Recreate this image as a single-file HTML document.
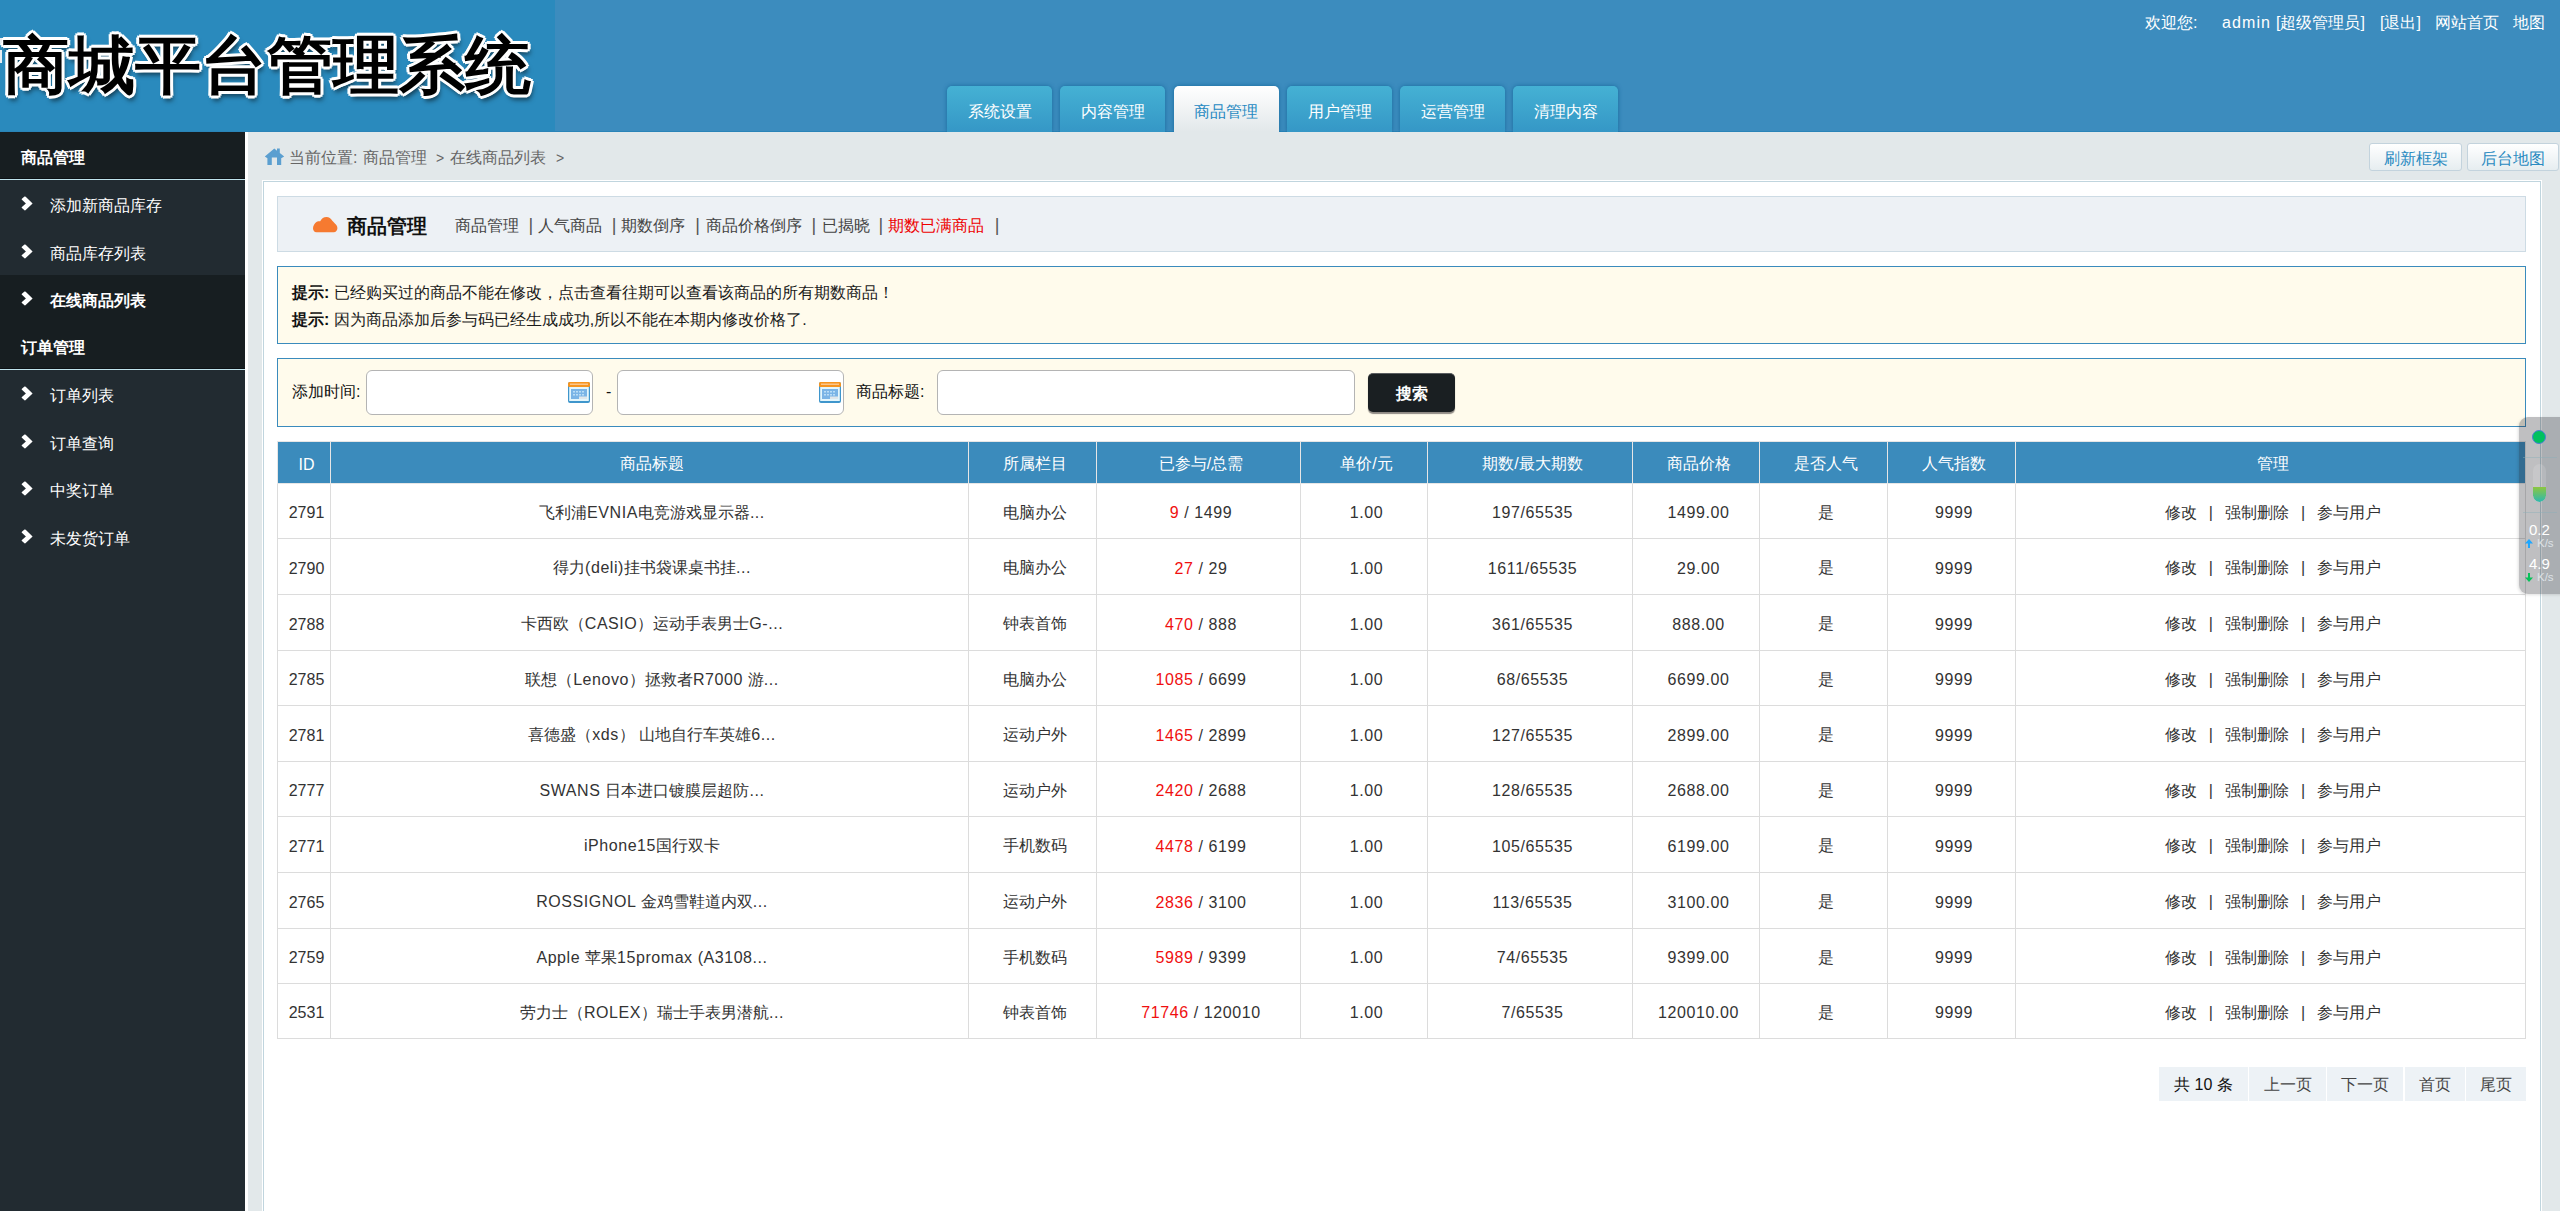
<!DOCTYPE html>
<html><head><meta charset="utf-8">
<style>
*{box-sizing:border-box;margin:0;padding:0}
html,body{width:2560px;height:1211px;overflow:hidden}
body{position:relative;background:#e2e8ea;font-family:"Liberation Sans",sans-serif;font-size:16px;color:#333}
.abs{position:absolute}
#hd{left:0;top:0;width:2560px;height:132px;background:#3c8cbe;border-bottom:1px solid #2a84b8}
#logo{left:0;top:0;width:555px;height:131px;background:#2a8abd;overflow:hidden}
#logo span{position:absolute;left:3px;top:27px;font-size:66px;font-weight:900;transform:scaleY(.955);transform-origin:0 0;color:#000;white-space:nowrap;line-height:80px;
 -webkit-text-stroke:0;text-shadow:-2px -2px 0 #fff,2px -2px 0 #fff,-2px 2px 0 #fff,2px 2px 0 #fff,0 3px 0 #fff,0 -3px 0 #fff,3px 0 0 #fff,-3px 0 0 #fff,2px 5px 5px rgba(0,0,0,.6)}
#user{top:13px;left:2145px;width:400px;height:20px;color:#fff;white-space:nowrap;line-height:20px}
#user span{position:absolute;top:0}
.tab{top:86px;width:105px;height:46px;border-radius:5px 5px 0 0;background:linear-gradient(#45b1d4,#3597c6);color:#fff;text-align:center;line-height:46px;padding-top:3px;box-shadow:0 0 4px rgba(15,100,150,.85)}
.tab.on{background:linear-gradient(#fff,#e2e8ea);color:#2589c2}
#side{left:0;top:132px;width:245px;height:1079px;background:#222b31}
#strip{left:245px;top:132px;width:3px;height:1079px;background:#fff}
.sh{position:absolute;left:0;width:245px;height:48px;background:#171e21;color:#fff;font-weight:bold;line-height:46px;padding:3px 0 0 21px;border-bottom:1px solid #bfe3ec}
.sh:after{content:"";position:absolute;left:0;right:0;bottom:0;height:1px;background:#0c1115}
.si{position:absolute;left:0;width:245px;height:47.5px;color:#fff;line-height:46px;padding:3px 0 0 50px}
.si.on{background:#171e21;font-weight:bold}
.si svg{position:absolute;left:20px;top:16px}

.btn{top:143px;height:28px;border:1px solid #c3d3dd;border-radius:3px;background:linear-gradient(#fff,#e6edf0);color:#2b8bc1;text-align:center;line-height:30px}
#box{left:262px;top:180px;width:2280px;height:1100px;border:1px solid #fff;box-shadow:inset 0 0 0 1px #c0d5de;background:#fff}
#nav{left:277px;top:196px;width:2249px;height:56px;border:1px solid #cddbe4;background:#edf1f5}
#notice{left:277px;top:266px;width:2249px;height:78px;border:1px solid #3a8bbd;background:#fffbec}
#search span{color:#111 !important}
#search{left:277px;top:358px;width:2249px;height:69px;border:1px solid #3a8bbd;background:#fffbec}
.inp{top:11px;height:45px;border:1px solid #b4b4b4;border-radius:6px;background:#fff}
#sbtn{left:1090px;top:14px;width:87px;height:39px;border-radius:5px;background:#1a1f22;border-top:1px solid #5a5d60;color:#fff;font-weight:bold;text-align:center;line-height:39px;box-shadow:0 1.5px 1px #8f8a85}

#tb{left:277px;top:441px;width:2249px;border-collapse:collapse;table-layout:fixed;background:#fff}
#tb td{border:1px solid #dcdcdc;text-align:center;color:#333;white-space:nowrap;overflow:hidden;padding:0}
#tb tr.th td{background:#3b8bbc;color:#fff;height:42px;border-color:#e6e6e6}
#tb .red{color:#f01010}
#tb tr:not(.th) td:nth-child(4),#tb tr:not(.th) td:nth-child(5),#tb tr:not(.th) td:nth-child(6),#tb tr:not(.th) td:nth-child(7),#tb tr:not(.th) td:nth-child(9){letter-spacing:.6px}
#tb .mg i{font-style:normal;color:#333;margin:0 12px}
#pager{left:2159px;top:1067px;width:367px;height:34px}
#pager span{position:absolute;top:0;height:34px;background:#edf2f6;color:#444;text-align:center;line-height:34px;padding-top:1px}

#wg{left:2519px;top:417px;width:60px;height:177px;border-radius:9px;background:rgba(35,36,42,.29);box-shadow:-1px 1px 3px rgba(0,0,0,.12);z-index:10}
#wg .wt{color:#fff;line-height:14px;white-space:nowrap}
#wg .wk{color:#dde2e6;font-size:11.5px;line-height:12px;white-space:nowrap}
#tb td{padding:4px 0 0 5px}
.nl{top:18px;line-height:22px;color:#444;white-space:nowrap}
.nl.sp{font-size:18px;top:17px}
#tb .lt{letter-spacing:.55px}
</style></head><body>
<div id="hd" class="abs"></div>
<div id="logo" class="abs"><span>商城平台管理系统</span><i class="abs" style="left:0;top:38px;width:1.5px;height:5px;background:#e8eef2"></i><i class="abs" style="left:0;top:50px;width:1.5px;height:13px;background:#e8eef2"></i></div>
<div id="user" class="abs"><span style="left:0">欢迎您:</span><span style="left:77px;letter-spacing:1.1px">admin</span><span style="left:131px">[超级管理员]</span><span style="left:235px">[退出]</span><span style="left:290px">网站首页</span><span style="left:368px">地图</span></div>
<div class="abs" style="left:0;top:0;width:2560px;height:132px;overflow:hidden">
<div class="tab abs" style="left:947px">系统设置</div>
<div class="tab abs" style="left:1060px">内容管理</div>
<div class="tab abs on" style="left:1173.5px">商品管理</div>
<div class="tab abs" style="left:1287px">用户管理</div>
<div class="tab abs" style="left:1400px">运营管理</div>
<div class="tab abs" style="left:1513px">清理内容</div>
</div>

<div id="side" class="abs">
 <div class="sh" style="top:0">商品管理</div>
 <div class="si" style="top:48px"><svg width="14" height="18" viewBox="0 0 14 18"><path d="M4.5 0.6 Q5.1 0.2 5.7 0.7 L12.6 7.4 L5.7 14.1 Q5.1 14.6 4.5 14.2 L1.9 12.1 Q1.3 11.6 1.9 11 L5.9 7.4 L1.9 3.8 Q1.3 3.2 1.9 2.7 Z" fill="#fff"/></svg>添加新商品库存</div>
 <div class="si" style="top:95.5px"><svg width="14" height="18" viewBox="0 0 14 18"><path d="M4.5 0.6 Q5.1 0.2 5.7 0.7 L12.6 7.4 L5.7 14.1 Q5.1 14.6 4.5 14.2 L1.9 12.1 Q1.3 11.6 1.9 11 L5.9 7.4 L1.9 3.8 Q1.3 3.2 1.9 2.7 Z" fill="#fff"/></svg>商品库存列表</div>
 <div class="si on" style="top:143px;height:47px"><svg width="14" height="18" viewBox="0 0 14 18"><path d="M4.5 0.6 Q5.1 0.2 5.7 0.7 L12.6 7.4 L5.7 14.1 Q5.1 14.6 4.5 14.2 L1.9 12.1 Q1.3 11.6 1.9 11 L5.9 7.4 L1.9 3.8 Q1.3 3.2 1.9 2.7 Z" fill="#fff"/></svg>在线商品列表</div>
 <div class="sh" style="top:190px">订单管理</div>
 <div class="si" style="top:238px"><svg width="14" height="18" viewBox="0 0 14 18"><path d="M4.5 0.6 Q5.1 0.2 5.7 0.7 L12.6 7.4 L5.7 14.1 Q5.1 14.6 4.5 14.2 L1.9 12.1 Q1.3 11.6 1.9 11 L5.9 7.4 L1.9 3.8 Q1.3 3.2 1.9 2.7 Z" fill="#fff"/></svg>订单列表</div>
 <div class="si" style="top:285.5px"><svg width="14" height="18" viewBox="0 0 14 18"><path d="M4.5 0.6 Q5.1 0.2 5.7 0.7 L12.6 7.4 L5.7 14.1 Q5.1 14.6 4.5 14.2 L1.9 12.1 Q1.3 11.6 1.9 11 L5.9 7.4 L1.9 3.8 Q1.3 3.2 1.9 2.7 Z" fill="#fff"/></svg>订单查询</div>
 <div class="si" style="top:333px"><svg width="14" height="18" viewBox="0 0 14 18"><path d="M4.5 0.6 Q5.1 0.2 5.7 0.7 L12.6 7.4 L5.7 14.1 Q5.1 14.6 4.5 14.2 L1.9 12.1 Q1.3 11.6 1.9 11 L5.9 7.4 L1.9 3.8 Q1.3 3.2 1.9 2.7 Z" fill="#fff"/></svg>中奖订单</div>
 <div class="si" style="top:380.5px"><svg width="14" height="18" viewBox="0 0 14 18"><path d="M4.5 0.6 Q5.1 0.2 5.7 0.7 L12.6 7.4 L5.7 14.1 Q5.1 14.6 4.5 14.2 L1.9 12.1 Q1.3 11.6 1.9 11 L5.9 7.4 L1.9 3.8 Q1.3 3.2 1.9 2.7 Z" fill="#fff"/></svg>未发货订单</div>
</div>
<div id="strip" class="abs"></div>


<!-- breadcrumb -->
<svg class="abs" style="left:265px;top:147.7px;overflow:visible" width="20" height="18" viewBox="0 0 20 18"><path d="M9.3 0.6 L12 2.7 L12 0.6 L14.8 0.6 L14.8 4.9 L19.2 8.4 L16.2 10.2 L16.2 17 L12 17 L12 9.4 L6.8 9.4 L6.8 17 L2.4 17 L2.4 10.2 L-0.2 8.4 Z" fill="#5b9fd0"/></svg>
<div class="abs" id="crumb" style="left:289px;top:147px;width:300px;height:22px;color:#666;line-height:22px;white-space:nowrap"><span class="abs" style="left:0">当前位置:</span><span class="abs" style="left:74px">商品管理</span><span class="abs" style="left:147px;font-size:14px">&gt;</span><span class="abs" style="left:161px">在线商品列表</span><span class="abs" style="left:267px;font-size:14px">&gt;</span></div>
<div class="abs btn" style="left:2369px;width:93px">刷新框架</div>
<div class="abs btn" style="left:2467px;width:92px">后台地图</div>

<div class="abs" id="box"></div>
<div class="abs" id="nav">
 <svg class="abs" style="left:35px;top:19.5px" width="26" height="17" viewBox="0 0 26 17"><path d="M3.5 15.3 C1.3 15.3 0 13.5 0 11.3 C0 8.8 1.5 6.3 3.8 4.8 C4.5 4.4 6 4.3 7.2 4.3 C8.5 1.5 10.8 0 13.5 0 C16 0 18 1.3 19.3 3.8 C21 5.5 22.5 7 23.5 8.2 C24.2 9.2 24.4 10.3 24.4 11.3 C24.4 13.5 22.8 15.3 20.8 15.3 Z" fill="#f67a30"/></svg>
 <span class="abs" style="left:69px;top:17px;font-size:20px;font-weight:bold;color:#111;line-height:24px">商品管理</span>
 <span class="abs nl" style="left:177px">商品管理</span><span class="abs nl" style="left:260px">人气商品</span><span class="abs nl" style="left:343px">期数倒序</span><span class="abs nl" style="left:427.5px">商品价格倒序</span><span class="abs nl" style="left:544px">已揭晓</span><span class="abs nl" style="left:610px;color:#e00">期数已满商品</span><span class="abs nl sp" style="left:250.6px;color:#555">|</span><span class="abs nl sp" style="left:333.7px;color:#555">|</span><span class="abs nl sp" style="left:417.2px;color:#555">|</span><span class="abs nl sp" style="left:533.5px;color:#555">|</span><span class="abs nl sp" style="left:600.4000000000001px;color:#555">|</span><span class="abs nl sp" style="left:716.7px;color:#555">|</span>
</div>
<div class="abs" id="notice">
 <div style="position:absolute;left:14px;top:12px;line-height:27px;color:#1a1a1a;white-space:nowrap"><b style="color:#111">提示:</b> 已经购买过的商品不能在修改，点击查看往期可以查看该商品的所有期数商品！<br><b style="color:#111">提示:</b> 因为商品添加后参与码已经生成成功,所以不能在本期内修改价格了.</div>
</div>
<div class="abs" id="search">
 <span class="abs" style="left:14px;top:22px;line-height:22px;color:#333">添加时间:</span>
 <div class="abs inp" style="left:88px;width:227px"><span class="abs" style="left:201px;top:11px;line-height:0"><svg width="22" height="21" viewBox="0 0 22 21"><rect x="0" y="0" width="22" height="21" rx="2" fill="#3f96cc"/><rect x="0" y="0" width="22" height="5" rx="1.5" fill="#f7951f"/><rect x="2" y="1.5" width="18" height="1.5" fill="#fcc58a"/><rect x="1.2" y="5" width="19.6" height="14" fill="#e4f6fc"/><rect x="3" y="7" width="16" height="10" fill="#7ab4e6"/><g fill="#b9ddf6"><rect x="5" y="9" width="2" height="1.5"/><rect x="8" y="9" width="2" height="1.5"/><rect x="11" y="9" width="2" height="1.5"/><rect x="14" y="9" width="2" height="1.5"/><rect x="5" y="12" width="2" height="1.5"/><rect x="8" y="12" width="2" height="1.5"/><rect x="11" y="12" width="2" height="1.5"/><rect x="14" y="12" width="2" height="1.5"/></g><rect x="11" y="14.5" width="8" height="2.5" fill="#dfe6ea"/></svg></span></div>
 <span class="abs" style="left:328px;top:22px;line-height:22px;color:#333">-</span>
 <div class="abs inp" style="left:339px;width:227px"><span class="abs" style="left:201px;top:11px;line-height:0"><svg width="22" height="21" viewBox="0 0 22 21"><rect x="0" y="0" width="22" height="21" rx="2" fill="#3f96cc"/><rect x="0" y="0" width="22" height="5" rx="1.5" fill="#f7951f"/><rect x="2" y="1.5" width="18" height="1.5" fill="#fcc58a"/><rect x="1.2" y="5" width="19.6" height="14" fill="#e4f6fc"/><rect x="3" y="7" width="16" height="10" fill="#7ab4e6"/><g fill="#b9ddf6"><rect x="5" y="9" width="2" height="1.5"/><rect x="8" y="9" width="2" height="1.5"/><rect x="11" y="9" width="2" height="1.5"/><rect x="14" y="9" width="2" height="1.5"/><rect x="5" y="12" width="2" height="1.5"/><rect x="8" y="12" width="2" height="1.5"/><rect x="11" y="12" width="2" height="1.5"/><rect x="14" y="12" width="2" height="1.5"/></g><rect x="11" y="14.5" width="8" height="2.5" fill="#dfe6ea"/></svg></span></div>
 <span class="abs" style="left:578px;top:22px;line-height:22px;color:#333">商品标题:</span>
 <div class="abs inp" style="left:659px;width:418px"></div>
 <div class="abs" id="sbtn">搜索</div>
</div>

<table id="tb" class="abs"><colgroup><col style="width:53px"><col style="width:638px"><col style="width:128px"><col style="width:204px"><col style="width:127px"><col style="width:205px"><col style="width:127px"><col style="width:128px"><col style="width:128px"><col style="width:510px"></colgroup>
<tr class="th"><td>ID</td><td>商品标题</td><td>所属栏目</td><td>已参与/总需</td><td>单价/元</td><td>期数/最大期数</td><td>商品价格</td><td>是否人气</td><td>人气指数</td><td>管理</td></tr>
<tr style="height:55px"><td>2791</td><td>飞利浦<span class="lt">EVNIA</span>电竞游戏显示器<span class="lt">...</span></td><td>电脑办公</td><td><span class="red">9</span> / 1499</td><td>1.00</td><td>197/65535</td><td>1499.00</td><td>是</td><td>9999</td><td class="mg">修改<i>|</i>强制删除<i>|</i>参与用户</td></tr>
<tr style="height:56px"><td>2790</td><td>得力<span class="lt">(deli)</span>挂书袋课桌书挂<span class="lt">...</span></td><td>电脑办公</td><td><span class="red">27</span> / 29</td><td>1.00</td><td>1611/65535</td><td>29.00</td><td>是</td><td>9999</td><td class="mg">修改<i>|</i>强制删除<i>|</i>参与用户</td></tr>
<tr style="height:56px"><td>2788</td><td>卡西欧（<span class="lt">CASIO</span>）运动手表男士<span class="lt">G-...</span></td><td>钟表首饰</td><td><span class="red">470</span> / 888</td><td>1.00</td><td>361/65535</td><td>888.00</td><td>是</td><td>9999</td><td class="mg">修改<i>|</i>强制删除<i>|</i>参与用户</td></tr>
<tr style="height:55px"><td>2785</td><td>联想（<span class="lt">Lenovo</span>）拯救者<span class="lt">R7000 </span>游<span class="lt">...</span></td><td>电脑办公</td><td><span class="red">1085</span> / 6699</td><td>1.00</td><td>68/65535</td><td>6699.00</td><td>是</td><td>9999</td><td class="mg">修改<i>|</i>强制删除<i>|</i>参与用户</td></tr>
<tr style="height:56px"><td>2781</td><td>喜德盛（<span class="lt">xds</span>） 山地自行车英雄<span class="lt">6...</span></td><td>运动户外</td><td><span class="red">1465</span> / 2899</td><td>1.00</td><td>127/65535</td><td>2899.00</td><td>是</td><td>9999</td><td class="mg">修改<i>|</i>强制删除<i>|</i>参与用户</td></tr>
<tr style="height:55px"><td>2777</td><td><span class="lt">SWANS </span>日本进口镀膜层超防<span class="lt">...</span></td><td>运动户外</td><td><span class="red">2420</span> / 2688</td><td>1.00</td><td>128/65535</td><td>2688.00</td><td>是</td><td>9999</td><td class="mg">修改<i>|</i>强制删除<i>|</i>参与用户</td></tr>
<tr style="height:56px"><td>2771</td><td><span class="lt">iPhone15</span>国行双卡</td><td>手机数码</td><td><span class="red">4478</span> / 6199</td><td>1.00</td><td>105/65535</td><td>6199.00</td><td>是</td><td>9999</td><td class="mg">修改<i>|</i>强制删除<i>|</i>参与用户</td></tr>
<tr style="height:56px"><td>2765</td><td><span class="lt">ROSSIGNOL </span>金鸡雪鞋道内双<span class="lt">...</span></td><td>运动户外</td><td><span class="red">2836</span> / 3100</td><td>1.00</td><td>113/65535</td><td>3100.00</td><td>是</td><td>9999</td><td class="mg">修改<i>|</i>强制删除<i>|</i>参与用户</td></tr>
<tr style="height:55px"><td>2759</td><td><span class="lt">Apple </span>苹果<span class="lt">15promax (A3108...</span></td><td>手机数码</td><td><span class="red">5989</span> / 9399</td><td>1.00</td><td>74/65535</td><td>9399.00</td><td>是</td><td>9999</td><td class="mg">修改<i>|</i>强制删除<i>|</i>参与用户</td></tr>
<tr style="height:55px"><td>2531</td><td>劳力士（<span class="lt">ROLEX</span>）瑞士手表男潜航<span class="lt">...</span></td><td>钟表首饰</td><td><span class="red">71746</span> / 120010</td><td>1.00</td><td>7/65535</td><td>120010.00</td><td>是</td><td>9999</td><td class="mg">修改<i>|</i>强制删除<i>|</i>参与用户</td></tr>
</table>
<div class="abs" id="pager"><span style="left:0;width:89px;color:#111">共 10 条</span><span style="left:90px;width:77px">上一页</span><span style="left:168px;width:76px">下一页</span><span style="left:246px;width:60px">首页</span><span style="left:307px;width:60px">尾页</span></div>
<div class="abs" id="wg">
 <div class="abs" style="left:13px;top:13px;width:14px;height:14px;border-radius:50%;background:#00c15f;border:1px solid #4c7fd6"></div>
 <div class="abs" style="left:4px;top:40px;width:34px;height:1px;background:rgba(140,175,185,.45)"></div>
 <div class="abs" style="left:14px;top:47px;width:13px;height:38px;border-radius:6.5px;background:rgba(255,255,255,.13);overflow:hidden"><div class="abs" style="left:0;top:23px;width:13px;height:15px;border-radius:0 0 6.5px 6.5px;background:linear-gradient(#8dc640,#2db9b0)"></div></div>
 <div class="abs" style="left:4px;top:95px;width:34px;height:1px;background:rgba(140,175,185,.45)"></div>
 <div class="abs wt" style="left:10px;top:106px;font-size:15px">0.2</div>
 <div class="abs wk" style="left:18px;top:120px">K/s</div>
 <svg class="abs" style="left:6px;top:122px" width="8" height="9" viewBox="0 0 8 9"><path d="M4 0 L8 4.5 L5 4.5 L5 9 L3 9 L3 4.5 L0 4.5 Z" fill="#1ea7ff"/></svg>
 <div class="abs wt" style="left:10px;top:140px;font-size:15px">4.9</div>
 <div class="abs wk" style="left:18px;top:154px">K/s</div>
 <svg class="abs" style="left:6px;top:156px" width="8" height="9" viewBox="0 0 8 9"><path d="M3 0 L5 0 L5 4.5 L8 4.5 L4 9 L0 4.5 L3 4.5 Z" fill="#08c15a"/></svg>
</div>

</body></html>
